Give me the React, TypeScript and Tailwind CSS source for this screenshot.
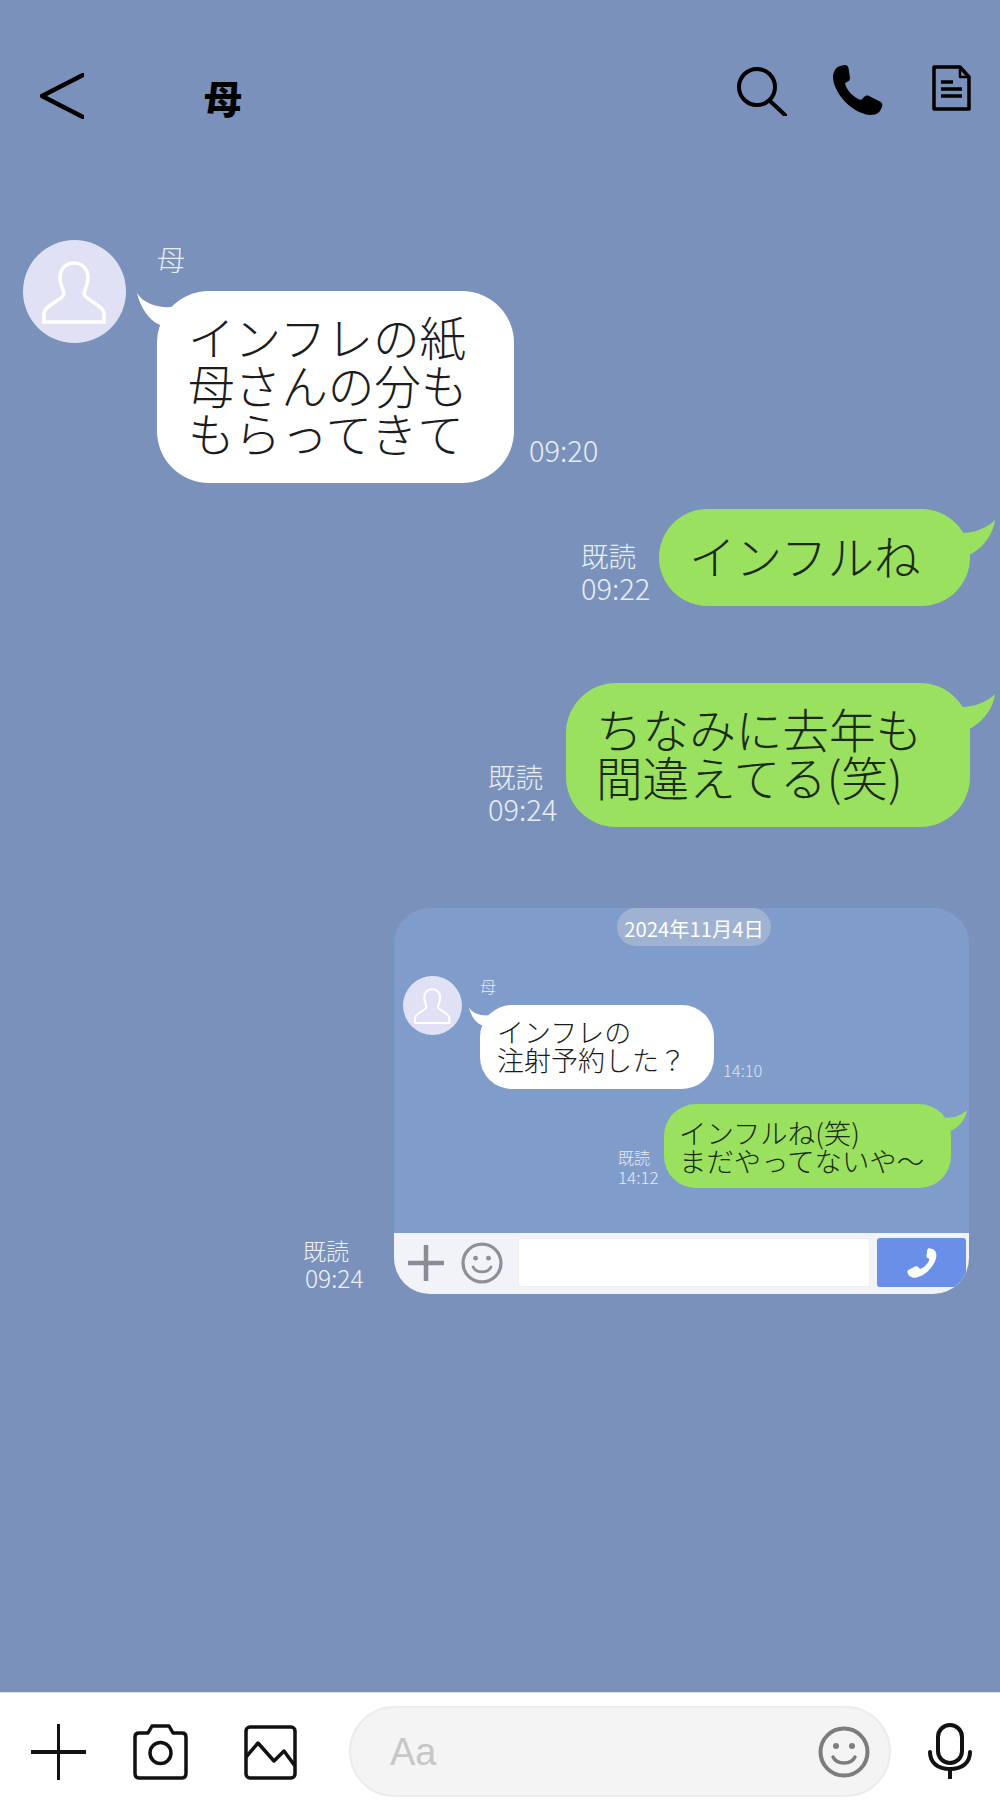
const FONT = "font-['Noto_Sans_CJK_JP','Liberation_Sans',sans-serif]"

function LeftTail({ className }: { className: string }) {
  return (
    <svg viewBox="0 0 40 36" className={className}>
      <path d="M1 1C8 12 22 16 36 15L36 35L24 33C12 28 4 14 1 1Z" fill="#fff" />
    </svg>
  )
}

function RightTail({ className }: { className: string }) {
  return (
    <svg viewBox="0 0 44 42" className={className}>
      <path d="M42 2C34 10 20 16 5 15L4 38L14 38C28 32 40 18 42 2Z" fill="#9ae15f" />
    </svg>
  )
}

function Person({ className }: { className: string }) {
  return (
    <div className={`${className} shrink-0 rounded-full bg-[#e0e1f5]`}>
      <svg viewBox="0 0 103 103" className="h-full w-full">
        <path
          d="M51 23C42 23 37 30 37 38C37 46 41 50 41 54C41 59 22 65 21 73L21 82L81 82L81 73C80 65 61 59 61 54C61 50 65 46 65 38C65 30 60 23 51 23Z"
          fill="none"
          stroke="#fff"
          strokeWidth="3.5"
        />
      </svg>
    </div>
  )
}

function Smiley({ className, color }: { className: string; color: string }) {
  return (
    <svg viewBox="0 0 52 52" className={className} fill="none" stroke={color}>
      <circle cx="26" cy="26" r="23.5" strokeWidth="4" />
      <circle cx="18" cy="20" r="3" fill={color} stroke="none" />
      <circle cx="34" cy="20" r="3" fill={color} stroke="none" />
      <path d="M15 31C19 39 33 39 37 31" strokeWidth="3.5" strokeLinecap="round" />
    </svg>
  )
}

const PHONE =
  'M8 1L13 0C15 0 16 1 16.5 3L18 13C18 15 17 16 15 17L13 18C14 25 22 33 29 35L32 32C33 31 35 30 37 31L47 36C50 37 51 39 50 42L48 46C46 49 42 50 38 50C18 48 1 26 1 12C1 7 4 2 8 1Z'

function Header() {
  return (
    <header className="flex h-[240px] items-start pl-[40px] pr-[29px] pt-[65px]">
      <svg viewBox="0 0 44 46" className="mt-[8px] h-[46px] w-[44px]" fill="none" stroke="#000" strokeWidth="4.5" strokeLinecap="round" strokeLinejoin="round">
        <path d="M43 2L2 23L43 44" />
      </svg>
      <span className="ml-[120px] mt-[10px] text-[38px] font-black leading-[44px] text-black">母</span>
      <svg viewBox="0 0 50 51" className="ml-auto h-[51px] w-[50px]" fill="none" stroke="#000" strokeWidth="4" strokeLinecap="round">
        <circle cx="20" cy="22" r="18" />
        <path d="M33 36L48 50" />
      </svg>
      <svg viewBox="0 0 51 50" className="ml-[45px] h-[50px] w-[51px]">
        <path d={PHONE} fill="#000" />
      </svg>
      <svg viewBox="0 0 39 46" className="ml-[49px] h-[46px] w-[39px]" fill="none" stroke="#000" strokeWidth="3.5" strokeLinejoin="round">
        <path d="M2 2L28 2L37 12L37 44L2 44Z" />
        <path d="M28 2L28 12L37 12" strokeWidth="2.5" />
        <path d="M9 17L21 17M9 24L30 24M9 31L30 31" />
      </svg>
    </header>
  )
}

function IncomingLarge() {
  return (
    <div className="flex pl-[23px]">
      <Person className="h-[103px] w-[103px]" />
      <div className="ml-[31px] flex flex-col">
        <span className="mt-[1px] h-[50px] text-[28px] font-light leading-[36px] text-[#e8edf5]">母</span>
        <div className="flex items-end">
          <div className="relative h-[192px] w-[357px] rounded-[52px] bg-white pl-[31px] pt-[21px] text-[46.6px] font-light leading-[48px] text-[#1c1c1c]">
            <LeftTail className="absolute -left-[21px] top-[1px] h-[36px] w-[40px]" />
            <p className="relative whitespace-nowrap">インフレの紙<br />母さんの分も<br />もらってきて</p>
          </div>
          <span className="mb-[18px] ml-[15px] text-[29px] font-light leading-[32px] text-[#e8edf5]">09:20</span>
        </div>
      </div>
    </div>
  )
}

function Outgoing({ lines, width, height, read, time, top }: { lines: string[]; width: string; height: string; read: string; time: string; top: string }) {
  return (
    <div className={`flex items-end justify-end pr-[30px] ${top}`}>
      <div className="mb-[3px] mr-[10px] w-[68px] whitespace-nowrap font-light leading-[32px] text-[#e8edf5]">
        <div className="text-[27.5px]">{read}</div>
        <div className="text-[29px]">{time}</div>
      </div>
      <div className={`relative flex flex-col justify-center rounded-[50px] bg-[#9ae15f] pb-[6px] pl-[30px] text-[46.6px] font-light leading-[48px] text-[#1c2a14] ${width} ${height}`}>
        <RightTail className="absolute -right-[27px] top-[9px] h-[42px] w-[44px]" />
        {lines.map((l) => (
          <p key={l} className="relative whitespace-nowrap">{l}</p>
        ))}
      </div>
    </div>
  )
}

function Quoted() {
  return (
    <div className="mt-[81px] flex items-end justify-end pr-[31px]">
      <div className="mb-[2px] mr-[32px] w-[59px] whitespace-nowrap font-light leading-[28px] text-[#eef1f7]">
        <div className="text-[23px]">既読</div>
        <div className="ml-[2px] text-[24.5px]">09:24</div>
      </div>
      <div className="flex h-[386px] w-[575px] flex-col overflow-hidden rounded-[36px] bg-[#809cca]">
        <div className="flex-1">
          <div className="ml-[223px] flex h-[38px] w-[154px] items-center justify-center rounded-full bg-[#a0b2d2] pt-[3px] text-[20.3px] leading-none text-white">2024年11月4日</div>
          <div className="mt-[30px] flex pl-[9px]">
            <Person className="h-[59px] w-[59px]" />
            <div className="ml-[18px] flex flex-col">
              <span className="h-[29px] text-[16px] font-light leading-[20px] text-[#e8edf5]">母</span>
              <div className="flex items-end">
                <div className="relative h-[84px] w-[234px] rounded-[32px] bg-white pl-[17px] pt-[13px] text-[27px] font-light leading-[28px] text-[#1c1c1c]">
                  <LeftTail className="absolute -left-[12px] top-[2px] h-[20px] w-[23px]" />
                  <p className="relative whitespace-nowrap">インフレの<br />注射予約した？</p>
                </div>
                <span className="mb-[9px] ml-[9px] text-[16.5px] font-light leading-[20px] text-[#dfe6f2]">14:10</span>
              </div>
            </div>
          </div>
          <div className="mt-[15px] flex items-end justify-end pr-[18px]">
            <div className="mb-[1px] mr-[5px] w-[41px] whitespace-nowrap font-light leading-[20px] text-[#e6ebf4]">
              <div className="text-[16px]">既読</div>
              <div className="text-[17px]">14:12</div>
            </div>
            <div className="relative h-[84px] w-[287px] rounded-[32px] bg-[#9ae15f] pl-[15px] pt-[14px] text-[27.4px] font-light leading-[28px] text-[#1c2a14]">
              <RightTail className="absolute -right-[17px] top-[5px] h-[24px] w-[25px]" />
              <p className="relative whitespace-nowrap">インフルね(笑)<br />まだやってないや～</p>
            </div>
          </div>
        </div>
        <div className="flex h-[61px] items-center bg-[#f2f3f8] pb-[2px] pl-[14px] pr-[3px]">
          <svg viewBox="0 0 36 36" className="h-[36px] w-[36px]" fill="none" stroke="#888c94" strokeWidth="4.5">
            <path d="M18 0L18 36M0 18L36 18" />
          </svg>
          <Smiley className="ml-[17px] h-[42px] w-[42px]" color="#8d9096" />
          <div className="ml-[15px] h-[49px] w-[352px] rounded-[2px] border border-[#eceef3] bg-white" />
          <div className="ml-[7px] flex h-[49px] w-[89px] items-center justify-center rounded-[3px] bg-[#6a8fe8]">
            <svg viewBox="0 0 51 50" className="h-[30px] w-[30px] -scale-x-100">
              <path d={PHONE} fill="#fff" />
            </svg>
          </div>
        </div>
      </div>
    </div>
  )
}

function Footer() {
  return (
    <footer className="flex h-[125px] items-start border-t border-[#dfe3ea] bg-white pl-[31px] pt-[13px]">
      <svg viewBox="0 0 55 56" className="mt-[18px] h-[56px] w-[55px]" fill="none" stroke="#111" strokeWidth="3">
        <path d="M27.5 0L27.5 56" />
        <path d="M0 28L55 28" strokeWidth="4" />
      </svg>
      <svg viewBox="0 0 55 56" className="ml-[47px] mt-[18px] h-[56px] w-[55px]" fill="none" stroke="#111" strokeWidth="3.5" strokeLinejoin="round">
        <path d="M6 9L15 9L19 2L36 2L40 9L49 9C52 9 53 11 53 13L53 49C53 52 52 54 49 54L6 54C3 54 2 52 2 49L2 13C2 11 3 9 6 9Z" />
        <circle cx="27.5" cy="29" r="10.5" />
      </svg>
      <svg viewBox="0 0 53 55" className="ml-[56px] mt-[19px] h-[55px] w-[53px]" fill="none" stroke="#111" strokeWidth="3.5" strokeLinejoin="round">
        <rect x="2" y="2" width="49" height="51" rx="4" />
        <path d="M2 32L14 18L30 36L40 26L51 41" />
      </svg>
      <div className="ml-[52px] flex h-[91px] w-[542px] items-center rounded-full border-2 border-[#ececec] bg-[#f4f4f4] pl-[39px] pr-[19px]">
        <span className="text-[38px] font-['Liberation_Sans',sans-serif] leading-none text-[#c6c6c6]">Aa</span>
        <Smiley className="ml-auto h-[52px] w-[52px]" color="#7d7d7d" />
      </div>
      <svg viewBox="0 0 44 56" className="ml-[37px] mt-[17px] h-[56px] w-[44px]" fill="none" stroke="#111" strokeWidth="4" strokeLinecap="round">
        <rect x="10" y="2" width="24" height="38" rx="12" />
        <path d="M2 29C2 40 10 46 22 46C34 46 42 40 42 29" />
        <path d="M22 46L22 55" />
      </svg>
    </footer>
  )
}

export default function App() {
  return (
    <div className={`flex h-[1817px] w-[1000px] flex-col overflow-hidden bg-[#7a92bb] ${FONT}`}>
      <Header />
      <main className="flex-1">
        <IncomingLarge />
        <Outgoing lines={['インフルね']} width="w-[311px]" height="h-[97px]" read="既読" time="09:22" top="mt-[26px]" />
        <Outgoing lines={['ちなみに去年も', '間違えてる(笑)']} width="w-[404px]" height="h-[144px]" read="既読" time="09:24" top="mt-[77px]" />
        <Quoted />
      </main>
      <Footer />
    </div>
  )
}
